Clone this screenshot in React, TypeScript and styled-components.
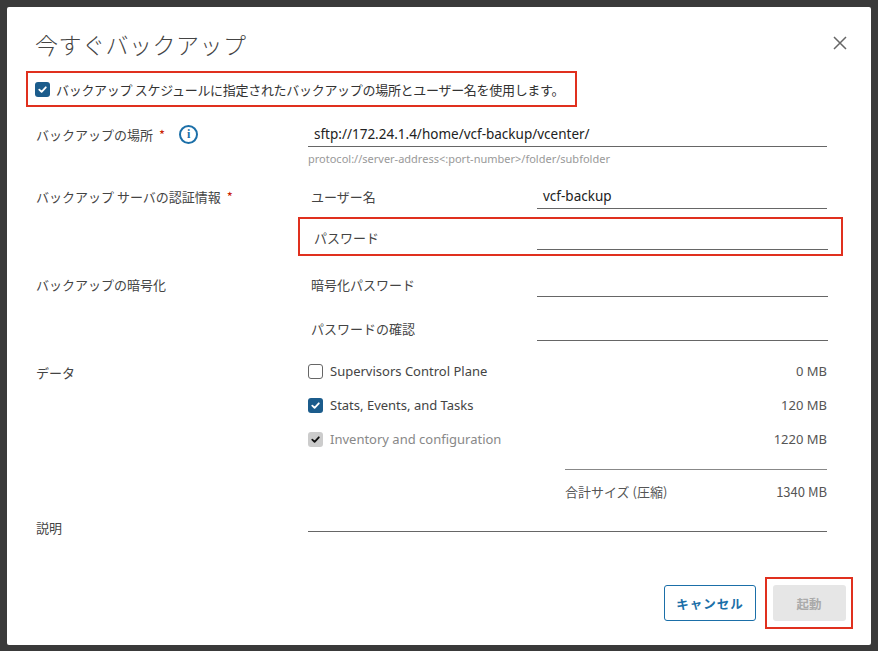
import React from "react";
import styled, { createGlobalStyle } from "styled-components";

const G = createGlobalStyle`
  html,body{margin:0;padding:0;background:#3a3a3a;}
  body{font-family:"Noto Sans CJK JP","Noto Sans",sans-serif;color:#333;}
`;
const Frame = styled.div`width:878px;height:651px;box-sizing:border-box;padding:7px 7px 6px 7px;`;
const Dialog = styled.div`background:#fff;height:100%;border-radius:2px;position:relative;box-sizing:border-box;padding:22px 0 0 28px;`;
const Title = styled.h1`margin:0 0 12px 0;font-size:23px;font-weight:300;color:#444;letter-spacing:0.5px;line-height:30px;`;
const Close = styled.button`position:absolute;right:22px;top:28px;border:0;background:none;padding:0;width:18px;height:18px;`;
const RedBox = styled.div`border:2.5px solid #e0301e;box-sizing:border-box;display:flex;align-items:center;`;
const TopRow = styled(RedBox)`width:551px;height:36px;margin-left:-9px;padding-left:7px;gap:6px;font-size:13px;letter-spacing:-0.3px;white-space:nowrap;color:#333;`;
const Box = styled.span<{ $on?: boolean; $dis?: boolean }>`width:15px;height:15px;border-radius:3px;box-sizing:border-box;display:inline-flex;align-items:center;justify-content:center;flex:none;
  background:${p => p.$dis ? "#ccc" : p.$on ? "#1b5c8c" : "#fff"};border:${p => p.$on || p.$dis ? "none" : "1.5px solid #666"};`;
const Check = ({ c = "#fff" }: { c?: string }) => (
  <svg width="11" height="11" viewBox="0 0 12 12"><path d="M2.5 6.2 5 8.6 9.6 3.6" fill="none" stroke={c} strokeWidth="2" strokeLinecap="round" strokeLinejoin="round" /></svg>
);
const Grid = styled.div`display:grid;grid-template-columns:272px 520px;margin-left:1px;margin-top:18px;font-size:13px;`;
const Label = styled.div<{ $h: number }>`height:${p => p.$h}px;display:flex;align-items:flex-start;gap:6px;color:#444;`;
const Star = styled.span`color:#c92100;`;
const Info = styled.span`display:inline-flex;width:15px;height:15px;border:2px solid #1b6fa8;border-radius:50%;color:#1b6fa8;font:bold 12px "Liberation Serif",serif;align-items:center;justify-content:center;margin-left:8px;margin-top:0px;`;
const Line = styled.div<{ $w: number }>`width:${p => p.$w}px;border-bottom:1px solid #666;height:22px;box-sizing:border-box;padding-left:6px;font-size:13.5px;color:#222;font-family:"Noto Sans",sans-serif;`;
const Hint = styled.div`font-size:11px;color:#999;margin-top:4px;font-family:"Noto Sans",sans-serif;`;
const Field = styled.div`display:flex;align-items:flex-start;`;
const Sub = styled.div`width:226px;padding-left:3px;color:#444;`;
const PwBox = styled.div`margin-left:-10px;margin-top:-14px;width:545px;height:39px;border:2.5px solid #e0301e;box-sizing:border-box;display:flex;align-items:flex-start;padding:9px 0 0 11px;`;
const DataRow = styled.div<{ $dis?: boolean }>`display:flex;align-items:center;gap:7px;height:34px;color:${p => p.$dis ? "#888" : "#444"};font-family:"Noto Sans",sans-serif;font-size:13px;`;
const Size = styled.span`margin-left:auto;margin-right:1px;color:#555;`;
const Total = styled.div`margin-left:257px;border-top:1px solid #888;margin-top:13px;width:262px;display:flex;justify-content:space-between;padding-top:12px;color:#555;`;
const Footer = styled.div`position:absolute;right:18px;bottom:16px;display:flex;align-items:center;gap:4px;`;
const Cancel = styled.button`height:36px;width:92px;border:1px solid #1b6fa8;border-radius:3px;background:#fff;color:#1b6fa8;font:bold 12.5px "Noto Sans CJK JP",sans-serif;letter-spacing:1px;margin-right:5px;`;
const StartBox = styled(RedBox)`width:88px;height:52px;justify-content:center;`;
const Start = styled.button`width:73px;height:36px;border:0;border-radius:3px;background:#e6e6e6;color:#aaa;font:bold 12.5px "Noto Sans CJK JP",sans-serif;`;

export default function App() {
  return (
    <Frame><G />
      <Dialog>
        <Title>今すぐバックアップ</Title>
        <Close><svg width="16" height="16" viewBox="0 0 16 16"><path d="M2 2 14 14M14 2 2 14" stroke="#666" strokeWidth="1.5" /></svg></Close>
        <TopRow><Box $on><Check /></Box>バックアップ スケジュールに指定されたバックアップの場所とユーザー名を使用します。</TopRow>
        <Grid>
          <Label $h={62}>バックアップの場所 <Star>*</Star><Info>i</Info></Label>
          <div><Line $w={519}>sftp://172.24.1.4/home/vcf-backup/vcenter/</Line><Hint>protocol://server-address&lt;:port-number&gt;/folder/subfolder</Hint></div>
          <Label $h={44}>バックアップ サーバの認証情報 <Star>*</Star></Label>
          <Field><Sub>ユーザー名</Sub><Line $w={290}>vcf-backup</Line></Field>
          <Label $h={44}></Label>
          <div><PwBox><Sub style={{ width: 223 }}>パスワード</Sub><Line $w={291} /></PwBox></div>
          <Label $h={44}>バックアップの暗号化</Label>
          <Field><Sub>暗号化パスワード</Sub><Line $w={291} /></Field>
          <Label $h={44}></Label>
          <Field><Sub>パスワードの確認</Sub><Line $w={291} /></Field>
          <Label $h={155}>データ</Label>
          <div style={{ marginTop: -9 }}>
            <DataRow><Box />Supervisors Control Plane<Size>0 MB</Size></DataRow>
            <DataRow><Box $on><Check /></Box>Stats, Events, and Tasks<Size>120 MB</Size></DataRow>
            <DataRow $dis><Box $dis><Check c="#111" /></Box>Inventory and configuration<Size>1220 MB</Size></DataRow>
            <Total><span>合計サイズ (圧縮)</span><span>1340 MB</span></Total>
          </div>
          <Label $h={30}>説明</Label>
          <div><Line $w={519} style={{ height: 14 }} /></div>
        </Grid>
        <Footer><Cancel>キャンセル</Cancel><StartBox><Start>起動</Start></StartBox></Footer>
      </Dialog>
    </Frame>
  );
}
